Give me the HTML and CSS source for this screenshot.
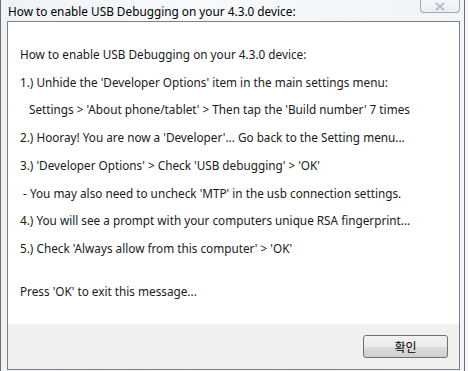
FILE: index.html
```html
<!DOCTYPE html>
<html lang="ko">
<head>
  <meta charset="UTF-8" />
  <title>USB Debugging</title>
  <link rel="stylesheet" href="styles.css">
</head>
<body>
  <div class="window">
    <div class="titlebar">
      <div class="title">How to enable USB Debugging on your 4.3.0 device:</div>
      <div class="close-btn">
        <svg width="12" height="9" viewBox="0 0 12 9">
          <path d="M2 1 L10 8 M10 1 L2 8" stroke="#b9bec6" stroke-width="2" fill="none" />
        </svg>
      </div>
    </div>
    <div class="client">
      <div class="message">
        <div class="line">How to enable USB Debugging on your 4.3.0 device:</div>
        <div class="line">1.) Unhide the 'Developer Options' item in the main settings menu:</div>
        <div class="line indent">Settings &gt; 'About phone/tablet' &gt; Then tap the 'Build number' 7 times</div>
        <div class="line">2.) Hooray! You are now a 'Developer'... Go back to the Setting menu...</div>
        <div class="line">3.) 'Developer Options' &gt; Check 'USB debugging' &gt; 'OK'</div>
        <div class="line"> - You may also need to uncheck 'MTP' in the usb connection settings.</div>
        <div class="line">4.) You will see a prompt with your computers unique RSA fingerprint...</div>
        <div class="line">5.) Check 'Always allow from this computer' &gt; 'OK'</div>
        <div class="line last">Press 'OK' to exit this message...</div>
      </div>
      <div class="footer">
        <button class="ok-btn">확인</button>
      </div>
    </div>
  </div>
</body>
</html>
```

FILE: styles.css
```css
body {
  margin: 0;
  font-family: "Noto Sans", "Noto Sans CJK KR", sans-serif;
  font-size: 11.8px;
  color: #1a1a1a;
  background-color: #f4f6f9;
  overflow: hidden;
}

.window {
  width: 465px;
  height: 371px;
  box-sizing: border-box;
  border-left: 1px solid #6e6e6e;
  border-right: 1px solid #6e6e6e;
  background: linear-gradient(to right, #eef2f7, #f7f9fb 40%, #f1f4f8);
  display: flex;
  flex-direction: column;
}

.titlebar {
  height: 21px;
  display: flex;
  justify-content: space-between;
  align-items: flex-start;
}

.title {
  padding: 0 0 0 7px;
  line-height: 23px;
  color: #000;
  white-space: nowrap;
}

.close-btn {
  width: 38px;
  height: 12px;
  margin-right: 4px;
  border: 1px solid #a3a8b0;
  border-top: none;
  border-radius: 0 0 4px 4px;
  background: linear-gradient(#f6f7f9, #e9ecf0);
  display: flex;
  justify-content: center;
  align-items: center;
}

.client {
  flex: 1;
  margin: 0 4px 1px 6px;
  border: 1px solid #7f7f7f;
  background-color: #fff;
  display: flex;
  flex-direction: column;
}

.message {
  flex: 1;
  padding: 19px 0 0 12px;
  font-size: 11.75px;
  color: #201a1a;
}

.line {
  line-height: 27.7px;
  white-space: pre;
}

.indent {
  padding-left: 9px;
}

.last {
  margin-top: 15px;
}

.footer {
  height: 45px;
  background-color: #f0f0f0;
  display: flex;
  justify-content: flex-end;
  align-items: flex-start;
  padding: 11px 11px 0 0;
  box-sizing: border-box;
}

.ok-btn {
  width: 85px;
  height: 23px;
  border: 1px solid #707070;
  border-radius: 3px;
  background: linear-gradient(#f2f2f2 0%, #ebebeb 50%, #dddddd 51%, #cfcfcf 100%);
  font-family: "Noto Sans CJK KR", sans-serif;
  font-size: 12px;
  color: #000;
  padding: 0;
}
```
